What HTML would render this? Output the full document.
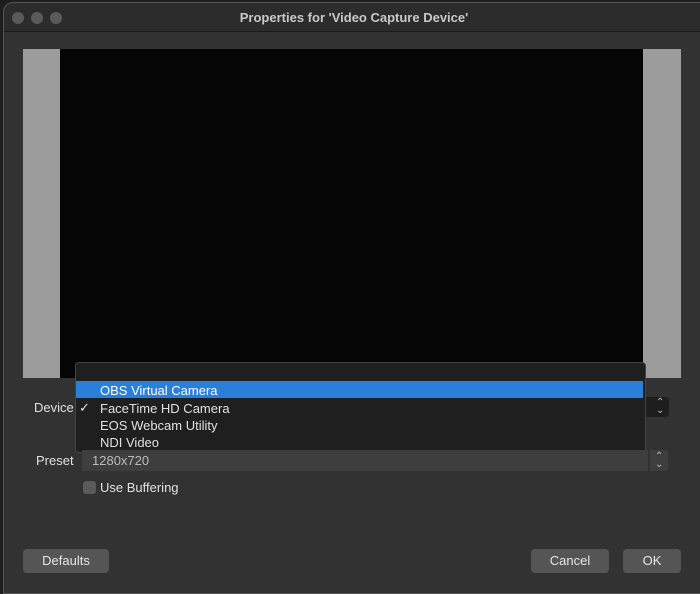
<!DOCTYPE html>
<html><head><style>
body{margin:0;width:700px;height:587px;background:#1e1e1e;overflow:hidden;font-family:"Liberation Sans",sans-serif;position:relative}
.win{position:absolute;left:3px;top:2px;width:700px;height:590px;background:#323232;border-radius:10px 0 0 0;border:1px solid #555}
.tb{position:absolute;left:0;top:0;right:0;height:28px;background:#2c2c2c;border-bottom:1px solid #1a1a1a;border-radius:10px 0 0 0}
.dot{position:absolute;top:9px;width:12px;height:12px;border-radius:50%;background:#5a5a5a}
.title{position:absolute;top:7px;left:0;width:700px;text-align:center;color:#c8c8c8;font-weight:bold;font-size:13px}
.a{position:absolute}
.t{position:absolute;color:#e0e0e0;font-size:13px}
.btn{position:absolute;background:#555;border-radius:4px;color:#e6e6e6;font-size:13px;text-align:center;line-height:24px;height:24px}
</style></head><body>
<div class="win">
<div class="tb"><div class="dot" style="left:8px"></div><div class="dot" style="left:27px"></div><div class="dot" style="left:46px"></div>
<div class="title">Properties for 'Video Capture Device'</div></div>
</div>
<div class="a" style="left:23px;top:49px;width:658px;height:329px;background:#9c9c9c"></div>
<div class="a" style="left:60px;top:49px;width:583px;height:329px;background:#050505"></div>
<div class="t" style="left:34px;top:400px">Device</div>
<div class="a" style="left:640px;top:397px;width:29px;height:20px;background:#1e1e1e;border-radius:0 4px 4px 0"></div>
<div class="t" style="left:656px;top:399px;font-size:10px;color:#bbb;line-height:8px">⌃<br>⌄</div>
<div class="a" style="left:75px;top:362px;width:569px;height:89px;background:#1f1f1f;border:1px solid #444;border-radius:4px"></div>
<div class="a" style="left:76px;top:381px;width:567px;height:17px;background:#2a7fd8"></div>
<div class="t" style="left:100px;top:383px;color:#fff">OBS Virtual Camera</div>
<div class="t" style="left:79px;top:400px">✓</div>
<div class="t" style="left:100px;top:401px">FaceTime HD Camera</div>
<div class="t" style="left:100px;top:418px">EOS Webcam Utility</div>
<div class="t" style="left:100px;top:435px">NDI Video</div>
<div class="t" style="left:36px;top:453px">Preset</div>
<div class="a" style="left:82px;top:450px;width:566px;height:21px;background:#3e3e3e"></div>
<div class="t" style="left:92px;top:453px;color:#bbb">1280x720</div>
<div class="a" style="left:650px;top:450px;width:18px;height:21px;background:#3e3e3e;border-radius:0 3px 3px 0"></div>
<div class="t" style="left:655px;top:453px;font-size:10px;color:#bbb;line-height:8px">⌃<br>⌄</div>
<div class="a" style="left:83px;top:481px;width:13px;height:13px;background:#5a5a5a;border-radius:3px"></div>
<div class="t" style="left:100px;top:480px">Use Buffering</div>
<div class="btn" style="left:23px;top:549px;width:86px">Defaults</div>
<div class="btn" style="left:531px;top:549px;width:78px">Cancel</div>
<div class="btn" style="left:623px;top:549px;width:58px">OK</div>
</body></html>
